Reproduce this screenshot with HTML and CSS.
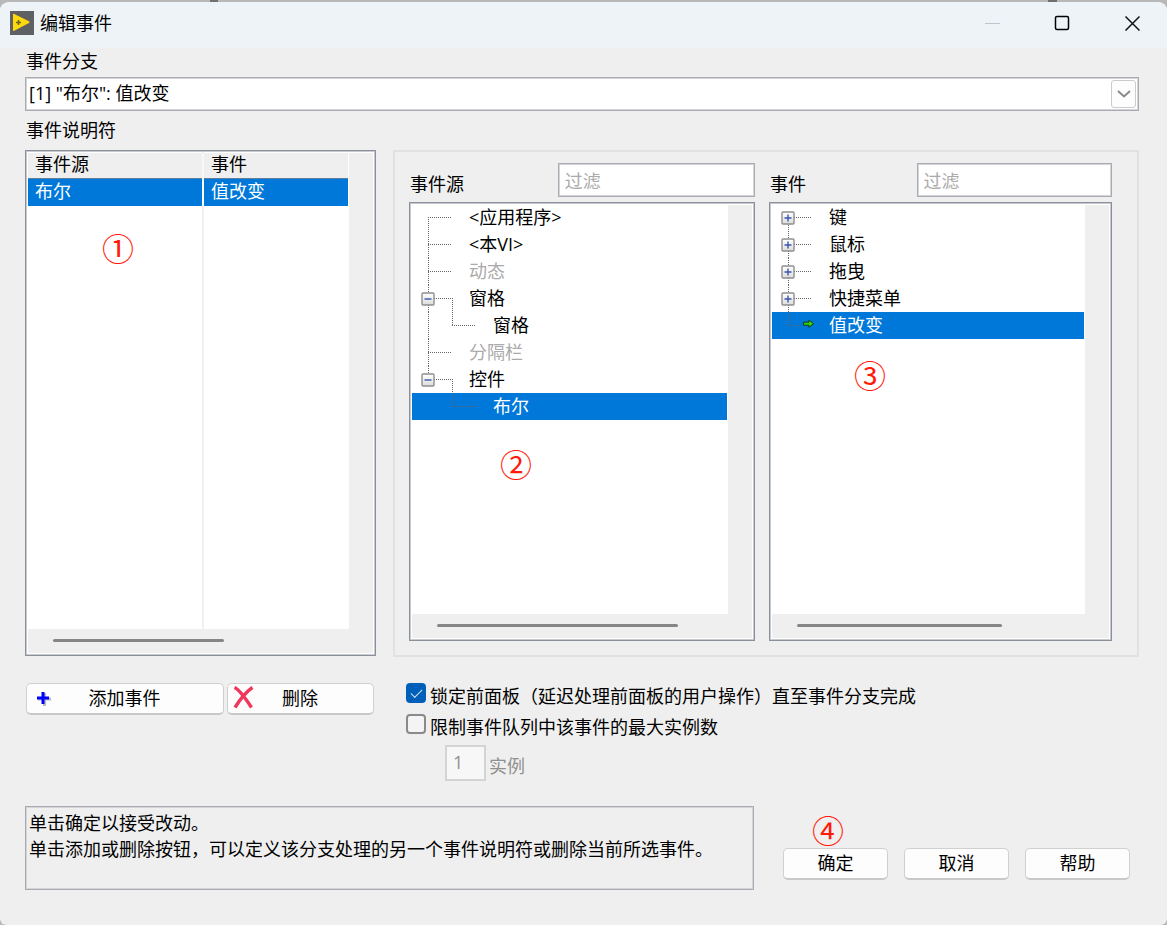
FILE: index.html
```html
<!DOCTYPE html>
<html lang="zh-CN">
<head>
<meta charset="utf-8">
<title>编辑事件</title>
<link rel="stylesheet" href="styles.css">
</head>
<body>
<svg class="defs" aria-hidden="true">
  <defs>
    <linearGradient id="box-fill" x1="0" y1="0" x2="0" y2="1">
      <stop offset="0" stop-color="#fff"/><stop offset="1" stop-color="#dcdcdc"/>
    </linearGradient>
    <symbol id="minus" viewBox="0 0 14 14">
      <rect x="1" y="1" width="12" height="12" rx="1" fill="url(#box-fill)" stroke="#8f8f8f" stroke-width="1.4"/>
      <path class="sign" d="M3.5 7h7"/>
    </symbol>
    <symbol id="plus" viewBox="0 0 14 14">
      <rect x="1" y="1" width="12" height="12" rx="1" fill="url(#box-fill)" stroke="#8f8f8f" stroke-width="1.4"/>
      <path class="sign" d="M3.5 7h7M7 3.5v7"/>
    </symbol>
  </defs>
</svg>
<div class="window">
  <header class="titlebar">
    <svg class="app-icon" viewBox="0 0 24 24" aria-hidden="true">
      <rect width="24" height="24" fill="#5f6064"/>
      <path d="M3 3.5Q3 2.4 4.2 3L19 10.3Q20.4 11.2 19 12L4.2 19.8Q3 20.3 3 19.2Z" fill="#ffd90a"/>
      <path d="M6 11.5h5M8.5 9v5" stroke="#6b6325" stroke-width="1.5"/>
    </svg>
    <h1 class="title">编辑事件</h1>
    <div class="window-controls">
      <button class="window-button" disabled aria-label="最小化"><svg viewBox="0 0 16 16"><path d="M1 8.500h15" stroke="#bfc4ca"/></svg></button>
      <button class="window-button" aria-label="最大化"><svg viewBox="0 0 16 16"><rect x="1.500" y="1.500" width="13" height="13" rx="1.500" fill="none" stroke="#000" stroke-width="1.500"/></svg></button>
      <button class="window-button" aria-label="关闭"><svg viewBox="0 0 16 16"><path d="M1.500 1.500l14 14M15.500 1.500L1.500 15.500" stroke="#111" stroke-width="1.500"/></svg></button>
    </div>
  </header>

  <main class="content">
    <label class="label case-label" for="case">事件分支</label>
    <div class="select-wrap">
      <select id="case" class="select"><option>[1] "布尔": 值改变</option></select>
      <span class="select-arrow"><svg viewBox="0 0 14 8"><path d="M1 1l6 5.500L13 1" fill="none" stroke="#8a8a8a" stroke-width="2"/></svg></span>
    </div>
    <div class="label spec-label">事件说明符</div>

    <div class="panes">
      <section class="listbox spec-list">
        <div class="table-area">
          <table class="table">
            <thead><tr><th class="source-column">事件源</th><th>事件</th></tr></thead>
            <tbody><tr><td>布尔</td><td>值改变</td></tr></tbody>
          </table>
        </div>
        <div class="scroll-y"></div>
        <div class="scroll-x"><span class="thumb thumb-spec"></span></div>
        <span class="mark mark-one">①</span>
      </section>

      <section class="group">
        <div class="chooser source-chooser">
          <div class="chooser-head">
            <label class="label" for="source-filter">事件源</label>
            <input id="source-filter" class="filter" type="text" placeholder="过滤">
          </div>
          <div class="listbox">
            <ul class="tree">
              <li class="node"><svg class="guide"><path d="M16.500 13v14M16 13.500h24"/></svg>&lt;应用程序&gt;</li>
              <li class="node"><svg class="guide"><path d="M16.500 0v27M16 13.500h24"/></svg>&lt;本VI&gt;</li>
              <li class="node muted"><svg class="guide"><path d="M16.500 0v27M16 13.500h24"/></svg>动态</li>
              <li class="node"><svg class="guide"><path d="M16.500 0v27M16 13.500h24M40.500 13v14"/><use href="#minus" x="9" y="7" width="14" height="14"/></svg>窗格</li>
              <li class="node child"><svg class="guide"><path d="M16.500 0v27M40.500 0v13M40 13.500h24"/></svg>窗格</li>
              <li class="node muted"><svg class="guide"><path d="M16.500 0v27M16 13.500h24"/></svg>分隔栏</li>
              <li class="node"><svg class="guide"><path d="M16.500 0v13M16 13.500h24M40.500 13v14"/><use href="#minus" x="9" y="7" width="14" height="14"/></svg>控件</li>
              <li class="node child selected"><svg class="guide"><path d="M40.500 0v13M40 13.500h24"/></svg>布尔</li>
            </ul>
            <div class="scroll-y"></div>
            <div class="scroll-x"><span class="thumb thumb-source"></span></div>
            <span class="mark mark-two">②</span>
          </div>
        </div>
        <div class="chooser event-chooser">
          <div class="chooser-head">
            <label class="label" for="event-filter">事件</label>
            <input id="event-filter" class="filter" type="text" placeholder="过滤">
          </div>
          <div class="listbox">
            <ul class="tree">
              <li class="node"><svg class="guide"><path d="M16.500 13v14M16 13.500h24"/><use href="#plus" x="9" y="7" width="14" height="14"/></svg>键</li>
              <li class="node"><svg class="guide"><path d="M16.500 0v27M16 13.500h24"/><use href="#plus" x="9" y="7" width="14" height="14"/></svg>鼠标</li>
              <li class="node"><svg class="guide"><path d="M16.500 0v27M16 13.500h24"/><use href="#plus" x="9" y="7" width="14" height="14"/></svg>拖曳</li>
              <li class="node"><svg class="guide"><path d="M16.500 0v27M16 13.500h24"/><use href="#plus" x="9" y="7" width="14" height="14"/></svg>快捷菜单</li>
              <li class="node selected"><svg class="guide"><path d="M16.500 0v13M16 13.500h12"/><path class="arrow" d="M31.500 10.200h5.500V8l4.500 3.700-4.500 3.700v-2.200h-5.500z"/></svg>值改变</li>
            </ul>
            <div class="scroll-y"></div>
            <div class="scroll-x"><span class="thumb thumb-event"></span></div>
            <span class="mark mark-three">③</span>
          </div>
        </div>
      </section>
    </div>

    <div class="options">
      <div class="edit-buttons">
        <button class="button add-button"><svg class="button-icon" viewBox="0 0 24 24" aria-hidden="true"><path d="M7 13h13M13.500 7v13" stroke="#b9b9c8" stroke-width="3"/><path d="M6 12h12M12 6v12" stroke="#00f" stroke-width="3"/></svg><span class="button-text">添加事件</span></button>
        <button class="button delete-button"><svg class="button-icon" viewBox="0 0 24 24" aria-hidden="true"><path d="M2.500 1.500Q8 4 19.500 21.500M20.500 1.500Q12 7 3 21.500" fill="none" stroke="#f0385c" stroke-width="3.400"/></svg><span class="button-text">删除</span></button>
      </div>
      <div class="checks">
        <label class="check"><input class="tick" type="checkbox" checked>锁定前面板（延迟处理前面板的用户操作）直至事件分支完成</label>
        <label class="check"><input class="tick" type="checkbox">限制事件队列中该事件的最大实例数</label>
        <div class="instances">
          <input id="count" class="count" type="text" value="1" disabled>
          <label class="count-label" for="count">实例</label>
        </div>
      </div>
    </div>

    <footer class="footer">
      <p class="hint">单击确定以接受改动。<br>单击添加或删除按钮，可以定义该分支处理的另一个事件说明符或删除当前所选事件。</p>
      <div class="actions">
        <button class="button action">确定</button>
        <button class="button action">取消</button>
        <button class="button action">帮助</button>
        <span class="mark mark-four">④</span>
      </div>
    </footer>
  </main>
</div>
</body>
</html>
```
FILE: styles.css
```css
* {
  box-sizing: border-box;
}

body {
  margin: 0;
  background: linear-gradient(90deg, #b8b8b8 210px, #707070 210px 218px, #b8b8b8 218px 1048px, #707070 1048px 1057px, #b8b8b8 1057px);
  color: #000;
  font: 18px/26px "Open Sans", "Noto Sans CJK SC", sans-serif;
}

button,
input,
select {
  font: inherit;
  color: inherit;
}

.defs {
  position: absolute;
  width: 0;
  height: 0;
}

.sign {
  stroke: #3a55ae;
  stroke-width: 1.4;
}

.window {
  display: flex;
  flex-direction: column;
  min-height: 100vh;
  border-top: 2px solid transparent;
  border-radius: 10px 10px 6px 6px;
  background: #efefef padding-box;
  overflow: hidden;
}

.titlebar {
  display: flex;
  align-items: center;
  height: 46px;
  padding: 0 0 4px 10px;
  background: #eef3f8;
}

.app-icon {
  width: 24px;
  height: 24px;
}

.title {
  flex: 1;
  margin: 0 0 0 6px;
  font-size: 18px;
  font-weight: 400;
}

.window-controls {
  display: flex;
}

.window-button {
  display: grid;
  place-items: center;
  width: 70px;
  height: 42px;
  padding: 0;
  border: 0;
  background: none;
}

.window-button svg {
  width: 16px;
  height: 16px;
}

.content {
  flex: 1;
  display: flex;
  flex-direction: column;
  padding: 0 28px 35px 25px;
}

.label {
  line-height: 26px;
}

.case-label,
.spec-label {
  padding-left: 1px;
}

.case-label {
  height: 29px;
}

.spec-label {
  padding-top: 6px;
  height: 39px;
}

.select-wrap {
  position: relative;
  height: 34px;
}

.select,
.filter,
.hint {
  border: 1px solid #a9aab2;
  box-shadow: inset 0 0 0 1px #d4d5d9;
}

.select {
  display: block;
  width: 100%;
  height: 34px;
  padding: 0 32px 2px 3px;
  border-radius: 0;
  background: #fff;
  appearance: none;
}

.select-arrow {
  position: absolute;
  top: 3px;
  right: 3px;
  display: grid;
  place-items: center;
  width: 25px;
  height: 28px;
  border: 1px solid #ccc;
  border-radius: 3px;
  background: #fdfdfd;
  pointer-events: none;
}

.select-arrow svg {
  width: 14px;
  height: 8px;
}

.panes {
  flex: 1;
  display: grid;
  grid-template-columns: 351fr 746fr;
  gap: 17px;
}

.listbox {
  position: relative;
  display: grid;
  grid-template: 1fr 25px / 1fr 25px;
  padding: 1px;
  border: 1px solid #8b919a;
  background: #fff;
  box-shadow: inset 0 0 0 1px #c6c9ce;
}

.scroll-y {
  grid-row: 1 / 3;
  grid-column: 2;
  margin: 1px 1px 1px 0;
  background: #efefef;
}

.scroll-x {
  grid-row: 2;
  grid-column: 1;
  margin: 0 0 1px 1px;
  padding-top: 10px;
  background: #efefef;
}

.thumb {
  display: block;
  height: 3px;
  border-radius: 2px;
  background: #868686;
}

.thumb-spec {
  width: 171px;
  margin-left: 25px;
}

.thumb-source {
  width: 241px;
  margin-left: 25px;
}

.thumb-event {
  width: 205px;
  margin-left: 25px;
}

.spec-list {
  margin-bottom: 1px;
}

.table-area {
  padding: 1px 1px 0;
  background: linear-gradient(90deg, transparent 175px, #f0f0f0 175px 177px, transparent 177px);
}

.table {
  width: 100%;
  border-collapse: collapse;
  table-layout: fixed;
}

.source-column {
  width: 175px;
}

.table th,
.table td {
  padding: 0 0 0 7px;
  border-right: 2px solid #fff;
  font-weight: 400;
  text-align: left;
}

.table th:last-child,
.table td:last-child {
  border-right: 0;
}

.table th {
  height: 25px;
  padding-bottom: 2px;
  border-color: #f7f7f7;
  background: #efefef;
  line-height: 23px;
}

.table td {
  height: 27px;
  padding-bottom: 2px;
  border-top: 1px solid #5d7f9c;
  background: #0078d9;
  color: #fff;
  line-height: 24px;
}

.group {
  display: grid;
  grid-template-columns: 346fr 343fr;
  gap: 14px;
  padding: 11px 25px 14px 14px;
  border: 2px solid #e1e1e1;
}

.chooser {
  display: flex;
  flex-direction: column;
  gap: 5px;
}

.chooser .listbox {
  flex: 1;
}

.chooser-head {
  display: flex;
  justify-content: space-between;
  height: 34px;
}

.chooser-head .label {
  padding: 8px 0 0 1px;
}

.filter {
  width: 57%;
  height: 34px;
  padding: 2px 6px 0;
  background: #fff;
}

.filter::placeholder {
  color: #aaa;
}

.tree {
  margin: 0;
  padding: 0 1px;
  list-style: none;
}

.node {
  position: relative;
  height: 27px;
  padding-left: 57px;
  line-height: 27px;
}

.child {
  padding-left: 81px;
}

.muted {
  color: #aaa;
}

.selected {
  background: #0078d9;
  color: #fff;
}

.guide {
  position: absolute;
  top: 0;
  left: 0;
  width: 66px;
  height: 27px;
}

.guide path {
  fill: none;
  stroke: #666;
  stroke-dasharray: 1 1;
}

.guide .arrow {
  fill: #35d60c;
  stroke: #123c10;
  stroke-dasharray: none;
}

.mark {
  position: absolute;
  color: #ff1a0a;
  font: 32px/32px "Noto Sans CJK SC", sans-serif;
  pointer-events: none;
}

.mark-one {
  top: 80px;
  left: 76px;
}

.mark-two {
  top: 244px;
  left: 90px;
}

.mark-three {
  top: 155px;
  left: 84px;
}

.mark-four {
  top: -35px;
  left: 29px;
}

.options {
  display: grid;
  grid-template-columns: 351fr 746fr;
  gap: 17px;
  padding-top: 26px;
}

.edit-buttons {
  display: grid;
  grid-template-columns: 198fr 147fr;
  align-items: start;
  gap: 3px;
  padding: 0 2px 0 1px;
}

.button {
  display: flex;
  align-items: center;
  justify-content: center;
  height: 32px;
  padding: 0 0 1px;
  border: 1px solid #d0d0d0;
  border-bottom: 2px solid #c8c8c8;
  border-radius: 5px;
  background: #fdfdfd;
}

.edit-buttons .button {
  justify-content: flex-start;
  padding: 0 4px 1px;
}

.button-icon {
  flex: none;
  width: 24px;
  height: 24px;
}

.button-text {
  flex: 1;
  text-align: center;
}

.add-button .button-text,
.delete-button .button-text {
  padding-right: 25px;
}

.checks {
  padding-left: 13px;
}

.check {
  display: flex;
  align-items: flex-start;
  gap: 4px;
  height: 31px;
}

.tick {
  flex: none;
  width: 20px;
  height: 20px;
  margin: 0;
  border: 2px solid #8a8a8a;
  border-radius: 4px;
  background: #f4f4f4;
  appearance: none;
}

.tick:checked {
  display: grid;
  place-items: center;
  border-color: #005fb8;
  background: #005fb8;
}

.tick:checked::after {
  content: "";
  width: 10px;
  height: 5px;
  margin-bottom: 3px;
  border: solid #cfe3f6;
  border-width: 0 0 1px 1px;
  rotate: -45deg;
}

.instances {
  display: flex;
  gap: 3px;
  padding-left: 39px;
  color: #909090;
}

.count {
  width: 41px;
  height: 36px;
  padding: 0 6px 2px;
  border: 2px solid #d2d4d6;
  background: #f7f7f7;
}

.count-label {
  padding-top: 8px;
}

.footer {
  display: flex;
  justify-content: space-between;
  align-items: flex-end;
  padding-top: 25px;
}

.hint {
  width: 729px;
  height: 84px;
  margin: 0;
  padding: 3px;
  line-height: 26px;
}

.actions {
  position: relative;
  display: flex;
  gap: 16px;
  padding: 0 9px 10px 0;
}

.action {
  width: 105px;
}
```
